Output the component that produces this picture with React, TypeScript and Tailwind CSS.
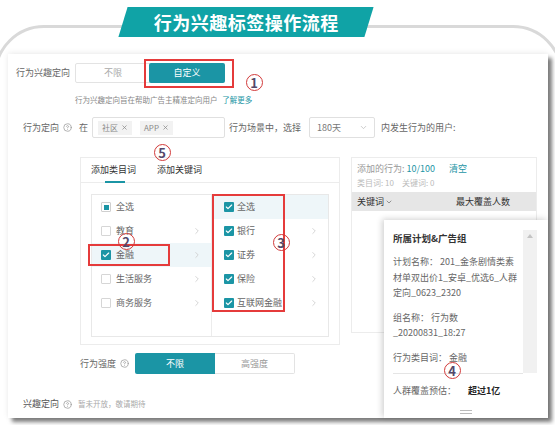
import { Check, ChevronDown, ChevronRight, CircleHelp, X } from 'lucide-react'

type BoxState = 'on' | 'off' | 'part'

const LEFT_ROWS: { label: string; state: BoxState; arrow: boolean; active?: boolean }[] = [
    { label: '全选', state: 'part', arrow: false },
    { label: '教育', state: 'off', arrow: true },
    { label: '金融', state: 'on', arrow: true, active: true },
    { label: '生活服务', state: 'off', arrow: true },
    { label: '商务服务', state: 'off', arrow: true },
]

const RIGHT_ROWS: { label: string; arrow: boolean; active?: boolean }[] = [
    { label: '全选', arrow: false, active: true },
    { label: '银行', arrow: true },
    { label: '证券', arrow: true },
    { label: '保险', arrow: true },
    { label: '互联网金融', arrow: true },
]

function Box({ state }: { state: BoxState }) {
    if (state === 'on')
        return (
            <span className="flex h-[10px] w-[10px] shrink-0 items-center justify-center rounded-[1px] bg-[#1b95a5]">
                <Check size={8} strokeWidth={3.5} className="text-white" />
            </span>
        )
    if (state === 'part')
        return (
            <span className="flex h-[10px] w-[10px] shrink-0 items-center justify-center rounded-[1px] border border-[#cfcfcf] bg-white">
                <span className="h-[5px] w-[5px] bg-[#1b95a5]" />
            </span>
        )
    return <span className="h-[10px] w-[10px] shrink-0 rounded-[1px] border border-[#d6d6d6] bg-white" />
}

function Mark({ n, x, y }: { n: number; x: number; y: number }) {
    // numbered red ring, centred on (x, y)
    return (
        <span
            className="absolute flex h-[17px] w-[17px] items-center justify-center rounded-full border-[1.5px] border-[#d23a3a] text-[13px] leading-none font-bold text-[#54486b]"
            style={{ left: x - 8.5, top: y - 8.5 }}
        >
            {n}
        </span>
    )
}

function RedFrame({ x, y, w, h }: { x: number; y: number; w: number; h: number }) {
    return <span className="absolute border-2 border-[#e53b3b]" style={{ left: x, top: y, width: w, height: h }} />
}

export default function App() {
    return (
        <div className="relative h-[425px] w-[555px] overflow-hidden bg-white font-['Noto_Sans_CJK_SC',sans-serif] text-[9px] text-[#666]">
            <div className="absolute top-[25px] -right-[8px] -left-[6px] h-[520px] rounded-[50px] border-[3px] border-[#d9d9d9]" />

            <div className="relative pt-[7px] pl-[123px]">
                <div className="flex h-[30px] w-[246px] -skew-x-[17deg] items-center justify-center bg-[#10a3a6]">
                    <span className="skew-x-[17deg] text-[18px] font-bold tracking-[0.5px] text-white">行为兴趣标签操作流程</span>
                </div>
            </div>

            <div className="relative mt-[17px] ml-[8px] h-[364px] w-[540px] bg-white pt-[9px] shadow-[4px_4px_4px_rgba(0,0,0,0.5),0_-1px_6px_rgba(0,0,0,0.08)]">
                <div className="flex h-[20px] items-center pl-[8px]">
                    <span className="w-[59px]">行为兴趣定向</span>
                    <div className="flex">
                        <span className="flex h-[20px] w-[76px] items-center justify-center rounded-l-[2px] border border-[#e3e3e3] text-[#aaa]">不限</span>
                        <span className="-ml-[2px] flex h-[20px] w-[76px] items-center justify-center rounded-[2px] bg-[#1b95a5] text-white">自定义</span>
                    </div>
                </div>

                <div className="mt-[12px] pl-[67px] text-[7.5px] leading-[10px] text-[#888]">
                    行为兴趣定向旨在帮助广告主精准定向用户 <span className="ml-[3px] text-[#1b95a5]">了解更多</span>
                </div>

                <div className="mt-[12px] flex h-[21px] items-center pl-[15px]">
                    <span className="flex w-[56px] items-center gap-[4px]">
                        行为定向 <CircleHelp size={9} className="text-[#999]" />
                    </span>
                    <span className="w-[13px]">在</span>
                    <div className="flex h-[21px] w-[133px] items-center gap-[8px] rounded-[2px] border border-[#e0e0e0] px-[5px]">
                        <span className="flex h-[14px] items-center gap-[3px] bg-[#f2f2f2] px-[4px] text-[8px] text-[#888]">
                            社区 <X size={7} strokeWidth={2.5} />
                        </span>
                        <span className="flex h-[14px] items-center gap-[3px] bg-[#f2f2f2] px-[4px] text-[8px] text-[#888]">
                            APP <X size={7} strokeWidth={2.5} />
                        </span>
                    </div>
                    <span className="ml-[4px]">行为场景中，选择</span>
                    <div className="ml-[8px] flex h-[21px] w-[66px] items-center justify-between rounded-[2px] border border-[#e0e0e0] pr-[6px] pl-[7px] text-[#777]">
                        180天 <ChevronDown size={9} className="text-[#bbb]" />
                    </div>
                    <span className="ml-[6px]">内发生行为的用户:</span>
                </div>

                <div className="mt-[19px] flex items-start pl-[72px]">
                    <div className="h-[188px] w-[260px] border border-[#ececec]">
                        <div className="flex h-[25px] items-center gap-[21px] border-b border-[#ececec] pl-[10px] text-[#333]">
                            <span>添加类目词</span>
                            <span>添加关键词</span>
                        </div>
                        <div className="relative">
                            <span className="absolute -top-[2px] left-[24px] h-[2px] w-[20px] bg-[#1b95a5]" />
                        </div>
                        <div className="mt-[11px] mr-[10px] ml-[10px] flex h-[143px] border border-[#e8e8e8]">
                            <div className="w-[119px]">
                                {LEFT_ROWS.map(r => (
                                    <div
                                        key={r.label}
                                        className={`flex h-[24px] items-center px-[9px] ${r.active ? 'bg-[#eef6f9]' : ''}`}
                                    >
                                        <Box state={r.state} />
                                        <span className="ml-[5px] flex-1 text-[#666]">{r.label}</span>
                                        {r.arrow && <ChevronRight size={10} className="text-[#ccc]" />}
                                    </div>
                                ))}
                            </div>
                            <div className="flex-1 border-l border-[#ececec]">
                                {RIGHT_ROWS.map(r => (
                                    <div
                                        key={r.label}
                                        className={`flex h-[24px] items-center pr-[9px] pl-[12px] ${r.active ? 'bg-[#eef6f9]' : ''}`}
                                    >
                                        <Box state="on" />
                                        <span className="ml-[3px] flex-1 text-[#666]">{r.label}</span>
                                        {r.arrow && <ChevronRight size={10} className="text-[#ccc]" />}
                                    </div>
                                ))}
                            </div>
                        </div>
                    </div>

                    <div className="ml-[11px] h-[176px] w-[186px] border border-[#ececec]">
                        <div className="mt-[4px] flex items-center pl-[5px] leading-[13px] text-[#999]">
                            添加的行为: <span className="ml-[2px] text-[#1b95a5]">10/100</span>
                            <span className="ml-[14px] text-[#1b95a5]">清空</span>
                        </div>
                        <div className="mt-[1px] pl-[5px] text-[8px] leading-[13px] text-[#bbb]">
                            类目词: 10<span className="ml-[8px]">关键词: 0</span>
                        </div>
                        <div className="mt-[3px] flex h-[19px] items-center bg-[#e6e6e6] pl-[5px] text-[#333]">
                            <span className="flex w-[99px] items-center gap-[1px]">
                                关键词 <ChevronDown size={8} className="text-[#666]" />
                            </span>
                            <span>最大覆盖人数</span>
                        </div>
                    </div>
                </div>

                <div className="mt-[8px] flex h-[21px] items-center pl-[72px]">
                    <span className="flex w-[55px] items-center gap-[4px]">
                        行为强度 <CircleHelp size={9} className="text-[#999]" />
                    </span>
                    <span className="flex h-[21px] w-[80px] items-center justify-center rounded-l-[2px] bg-[#1b95a5] text-white">不限</span>
                    <span className="flex h-[21px] w-[80px] items-center justify-center rounded-r-[2px] border border-l-0 border-[#e3e3e3] text-[#999]">高强度</span>
                </div>

                <div className="mt-[24px] flex items-center pl-[15px] leading-[12px]">
                    <span className="flex items-center gap-[4px] text-[#555]">
                        兴趣定向 <CircleHelp size={9} className="text-[#999]" />
                    </span>
                    <span className="ml-[6px] text-[7.5px] text-[#aaa]">暂未开放，敬请期待</span>
                </div>

                <div className="absolute top-[166px] right-0 h-[198px] w-[164px] bg-white shadow-[-2px_-1px_6px_rgba(0,0,0,0.18)]">
                    <div className="relative mr-[25px] ml-[9px] h-[154px] border-b border-[#e5e5e5]">
                        <div className="pt-[10px] text-[9.5px] leading-[16px] font-bold text-[#333]">所属计划&amp;广告组</div>
                        <div className="mt-[8px] leading-[15.5px]">
                            计划名称：&nbsp;201_金条剧情类素
                            <br />
                            材单双出价1_安卓_优选6_人群
                            <br />
                            定向_0623_2320
                        </div>
                        <div className="mt-[9px] leading-[15.5px]">
                            组名称：&nbsp;行为数
                            <br />
                            _20200831_18:27
                        </div>
                        <div className="mt-[9px] leading-[15.5px]">行为类目词：&nbsp;金融</div>
                    </div>
                    <div className="absolute top-[10px] left-[139px] flex h-[143px] w-[14px] justify-center bg-[#f1f1f1] pt-[4px]">
                        <span className="h-0 w-0 border-x-[3px] border-b-[4px] border-x-transparent border-b-[#c4c4c4]" />
                    </div>
                    <div className="mt-[10px] flex items-center pl-[9px] leading-[14px]">
                        人群覆盖预估：<span className="ml-[12px] font-bold text-[#222]">超过1亿</span>
                    </div>
                    <div className="mt-[12px] ml-[76px] flex w-[12px] flex-col gap-[2px]">
                        <span className="h-px bg-[#bbb]" />
                        <span className="h-px bg-[#bbb]" />
                    </div>
                </div>
            </div>

            <RedFrame x={144} y={59} w={90} h={29} />
            <RedFrame x={88} y={244} w={82} h={22} />
            <RedFrame x={212} y={194} w={73} h={118} />
            <Mark n={1} x={254} y={82} />
            <Mark n={5} x={162} y={152} />
            <Mark n={2} x={126} y={241} />
            <Mark n={3} x={281} y={242} />
            <Mark n={4} x={452} y={370} />
        </div>
    )
}
